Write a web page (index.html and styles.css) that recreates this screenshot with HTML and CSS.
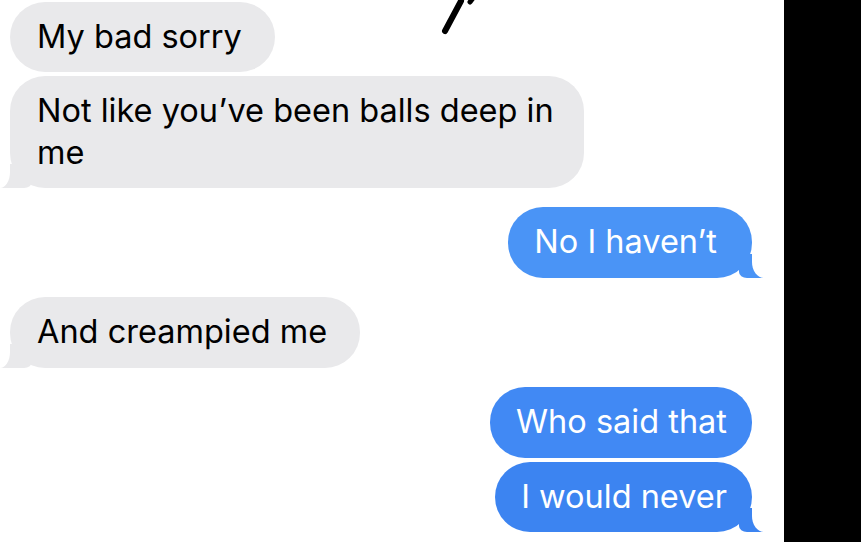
FILE: index.html
```html
<!DOCTYPE html>
<html lang="en">
<head>
  <meta charset="UTF-8" />
  <title>Messages</title>
  <link rel="stylesheet" href="styles.css">
</head>
<body>
  <div class="screen">
    <div class="chat">
      <svg class="scribble" width="50" height="40" viewBox="0 0 50 40">
        <path d="M7 31 L23 1" stroke="#000" stroke-width="6" stroke-linecap="round" fill="none"/>
        <path d="M32 2 L35 -2" stroke="#000" stroke-width="5" stroke-linecap="round" fill="none"/>
      </svg>

      <div class="group">
        <div class="bubble received wide">My bad sorry</div>
        <div class="bubble received tail">Not like you’ve been balls deep in me</div>
      </div>

      <div class="group">
        <div class="bubble sent tail light tall">No I haven’t</div>
      </div>

      <div class="group">
        <div class="bubble received tail tall wide">And creampied me</div>
      </div>

      <div class="group">
        <div class="bubble sent tall">Who said that</div>
        <div class="bubble sent tail dark">I would never</div>
      </div>
    </div>
    <div class="edge"></div>
  </div>
</body>
</html>
```

FILE: styles.css
```css
body {
  margin: 0;
  font-family: Inter, "Liberation Sans", Arial, sans-serif;
}

.screen {
  display: flex;
  width: 861px;
  height: 542px;
  overflow: hidden;
}

.chat {
  position: relative;
  width: 784px;
  background: #fff;
  padding-top: 2px;
  display: flex;
  flex-direction: column;
  gap: 19px;
  box-sizing: border-box;
}

.edge {
  flex: 1;
  background: #000;
}

.scribble {
  position: absolute;
  left: 438px;
  top: 0;
}

.group {
  display: flex;
  flex-direction: column;
  gap: 4px;
}

.bubble {
  position: relative;
  box-sizing: border-box;
  max-width: 574px;
  padding: 14px 27px 14px 27px;
  border-radius: 35px;
  font-size: 32.5px;
  line-height: 42px;
}

.bubble.tall {
  padding-bottom: 15px;
}

.bubble.wide {
  padding-right: 33px;
}

.received {
  align-self: flex-start;
  margin-left: 10px;
  background: #e9e9eb;
  color: #000;
}

.sent {
  align-self: flex-end;
  margin-right: 32px;
  background: #4189f4;
  color: #fff;
  padding-left: 26px;
  padding-right: 25px;
}

.sent.light {
  background: #4a94f6;
  padding-left: 26px;
  padding-right: 35px;
}

.sent.dark {
  background: #3c84f1;
}

.tail::before,
.tail::after {
  content: "";
  position: absolute;
  bottom: 0;
  height: 24px;
}

.sent.tail::before {
  right: -12px;
  width: 25px;
  background: inherit;
  border-bottom-left-radius: 8px 6px;
}

.sent.tail::after {
  left: 100%;
  width: 18px;
  background: #fff;
  border-bottom-left-radius: 12px 16px;
}

.received.tail::before {
  left: -10px;
  width: 32px;
  background: inherit;
  border-bottom-right-radius: 8px 6px;
}

.received.tail::after {
  right: 100%;
  width: 12px;
  background: #fff;
  border-bottom-right-radius: 10px 16px;
}
```
